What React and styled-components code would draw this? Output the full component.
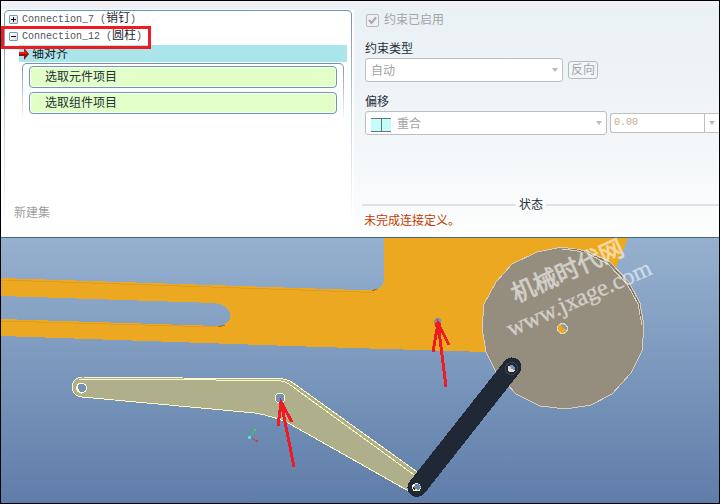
import React from "react";
import styled, { createGlobalStyle } from "styled-components";

const Global = createGlobalStyle`
  *, *::before, *::after { box-sizing: border-box; }
  body { margin: 0; }
  body, button, input, select {
    font-family: "Liberation Sans", "Noto Sans CJK SC", sans-serif;
    font-size: 12px;
    line-height: 16px;
  }
`;

const Frame = styled.div`
  border: 1px solid #000;
  overflow: hidden;
`;

const Dashboard = styled.section`
  display: grid;
  grid-template-columns: 353fr 365fr;
  background: linear-gradient(#f5f0f8, #eaf1f5 8px, #edf3f7 80px, #f5f8fa 160px, #fcfdfd 230px, #fff 232px);
  border-bottom: 1px solid #3f6a80;
  color: #252f38;
`;

const SetPane = styled.div`
  margin: 8px 0 10px;
  padding: 1px 2px 3px 3px;
  background: #fff;
`;

const SetList = styled.div`
  display: flex;
  flex-direction: column;
  min-height: 214px;
  padding: 0 4px 2px 3px;
  border: 1px solid transparent;
  border-radius: 5px;
  background:
    linear-gradient(#fff, #fff) padding-box,
    linear-gradient(#6d92b4, #c5d4e0 50%, #fff) border-box;
`;

const SetRow = styled.div`
  position: relative;
  display: flex;
  align-items: center;
  gap: 4px;
  height: 17px;
  padding-left: 1px;
  white-space: pre;
`;

const Toggle = styled.button`
  display: flex;
  width: 9px;
  height: 9px;
  padding: 0;
  border: 1px solid #7b9ab8;
  border-radius: 1px;
  background: linear-gradient(135deg, #fff, #d9dcdf);
`;

const SetName = styled.span`
  font-family: "Liberation Mono", "Noto Sans CJK SC", monospace;
  font-size: 10px;
  color: #4c545b;
`;

const SetType = styled.span`
  font-size: 12px;
  color: #1f2932;
`;

const Highlight = styled.div`
  position: absolute;
  z-index: 1;
  top: -2px;
  left: -7px;
  width: 150px;
  height: 23px;
  border: 3px solid #ed1c24;
  pointer-events: none;
`;

const Constraint = styled.div`
  display: flex;
  align-items: center;
  gap: 3px;
  height: 17px;
  margin-left: 11px;
  background: #a9e5e9;
  color: #10181c;
`;

const References = styled.div`
  display: flex;
  flex-direction: column;
  gap: 4px;
  margin: 1px 3px 0 14px;
  padding: 2px 6px 5px;
  border: 1px solid transparent;
  border-radius: 5px;
  background:
    linear-gradient(#fff, #fff) padding-box,
    linear-gradient(#6d92b4, #fff) border-box;
`;

const Reference = styled.button`
  height: 22px;
  padding: 0 15px;
  border: 1px solid #6f98ae;
  border-radius: 4px;
  background: #e1ffc6;
  box-shadow: inset 0 0 0 1px #f7fff0;
  color: #252f38;
  text-align: left;
`;

const NewSet = styled.button`
  align-self: flex-start;
  margin-top: auto;
  padding: 0 6px;
  border: 0;
  background: none;
  color: #a0a0a0;
`;

const Settings = styled.div`
  display: flex;
  flex-direction: column;
  padding: 11px 0 8px 8px;
  min-width: 0;
`;

const Enabled = styled.label`
  display: flex;
  align-items: center;
  gap: 5px;
  height: 16px;
  margin-left: 4px;
  color: #a2a5a7;
`;

const Check = styled.input`
  appearance: none;
  width: 13px;
  height: 13px;
  margin: 0;
  border: 1px solid #b5babd;
  border-radius: 2px;
  background: #eef0f1
    url("data:image/svg+xml,%3Csvg xmlns='http://www.w3.org/2000/svg' viewBox='0 0 11 11'%3E%3Cpath d='M2 5l2.5 3L9 2.500' fill='none' stroke='%23a5a8aa' stroke-width='2'/%3E%3C/svg%3E")
    center / 11px no-repeat;
`;

const FieldLabel = styled.label`
  margin: ${(p) => p.$top}px 0 1px 3px;
`;

const FieldRow = styled.div`
  display: flex;
  align-items: center;
  gap: ${(p) => p.$gap}px;
  margin-left: 3px;
`;

const Picker = styled.div`
  position: relative;
  flex: 0 1 ${(p) => p.$width}px;
  min-width: 0;
`;

const Select = styled.select`
  appearance: none;
  display: block;
  width: 100%;
  height: 24px;
  padding: 2px 16px 0 ${(p) => (p.$icon ? 31 : 5)}px;
  border: 1px solid #bcc0c2;
  border-radius: 3px;
  background: #fff;
  color: #a0a3a5;
  opacity: 1;
`;

const PickerIcon = styled.svg`
  position: absolute;
  top: 7px;
  left: 6px;
`;

const PickerArrow = styled.span`
  position: absolute;
  top: 10px;
  right: 4px;
  display: flex;
  pointer-events: none;
`;

const Flip = styled.button`
  height: 18px;
  padding: 0 2px;
  border: 1px solid #b5babd;
  border-radius: 3px;
  background: #f2f5f7;
  color: #a2a5a7;
  line-height: 14px;
`;

const Offset = styled.div`
  display: flex;
  flex: 1;
  height: 20px;
  min-width: 0;
  border: 1px solid #bcc0c2;
  border-right: 0;
  border-radius: 3px 0 0 3px;
  background: #fff;
`;

const OffsetValue = styled.input`
  flex: 1;
  min-width: 0;
  padding: 0 3px;
  border: 0;
  background: none;
  color: #c8ab93;
  font-family: "Liberation Mono", monospace;
  font-size: 10px;
`;

const OffsetMenu = styled.button`
  display: flex;
  align-items: center;
  justify-content: center;
  width: 15px;
  padding: 0;
  border: 0;
  border-left: 1px solid #bcc0c2;
  background: none;
`;

const StatusTitle = styled.h2`
  display: flex;
  align-items: center;
  gap: 3px;
  margin: auto 0 0;
  font-size: 12px;
  font-weight: 400;

  &::before, &::after {
    content: "";
    flex: 154;
    height: 2px;
    background: #dfe1e3;
  }
  &::after { flex-grow: 173; }
`;

const Status = styled.p`
  margin: 0 0 0 2px;
  color: #c23b00;
`;

const Viewport = styled.svg`
  display: block;
  width: 100%;
  height: auto;
  overflow: visible;
`;

function Arrow() {
  return (
    <svg width="8" height="4" viewBox="0 0 8 4" aria-hidden="true">
      <path d="M1 0h6L4 4z" fill="#b8bbbd" />
    </svg>
  );
}

function ConnectionSet({ name, type, open, marked }) {
  return (
    <SetRow>
      <Toggle aria-label={name} aria-expanded={open}>
        <svg width="7" height="7" viewBox="0 0 7 7">
          <path d={open ? "M1 3.500h5" : "M1 3.500h5M3.500 1v5"} stroke="#111" />
        </svg>
      </Toggle>
      <SetName>{name} (<SetType>{type}</SetType>)</SetName>
      {marked && <Highlight />}
    </SetRow>
  );
}

const DISC =
  "562,247 537,252 512,264 496,282 484,304 482,328 486,352 496,372 516,394 540,406 566,409 591,405 612,394 631,373 642,351 644,325 640,303 629,282 610,262 587,251";

function Model() {
  return (
    <Viewport viewBox="1 238 718 265" role="img" aria-label="3D">
      <defs>
        <linearGradient id="sky" gradientUnits="userSpaceOnUse" x1="0" y1="238" x2="0" y2="503">
          <stop offset="0" stopColor="#96b1cf" />
          <stop offset="1" stopColor="#5f7da9" />
        </linearGradient>
      </defs>
      <rect x="1" y="238" width="718" height="265" fill="url(#sky)" />

      <g shapeRendering="crispEdges">
        <path
          fill="#eda821"
          fillRule="evenodd"
          d="M1 278L360 290H374Q384 289 384 278V238H628L616 268L600 352H486L320 347L1 336ZM1 296L214 303C235 304 235 326 218 326L1 319Z"
        />
        <path d="M1 280L360 292H374M1 321L218 327" fill="none" stroke="#e09d1b" />
        <path d="M372 291L377 289M218 327l7-2" stroke="#a97413" />
        <circle cx="438" cy="321" r="3" fill="#7793b8" />
        <path d="M434 320v4l3 2" fill="none" stroke="#c58a19" />

        <polygon points={DISC} fill="#958e7e" stroke="#d8ceb9" />
        <path
          d="M562 249L585 252L608 264L627 284L638 304L642 325"
          fill="none"
          stroke="#d8ceb9"
        />
        <path d="M572 249L586 252L609 263L628 283L639 304L641 318" fill="none" stroke="#7a7364" strokeDasharray="5 2" />
        <circle cx="562.500" cy="328.500" r="5" fill="#eda821" stroke="#ded5c1" />
        <path d="M560 325h4l3 3v2l-3-1z" fill="#7f9dc2" />

        <path
          d="M82 377L283 379Q290 380 296 385L420 474L412 493L320 441L290 424Q277 417 255 413L82 397A10 10 0 0 1 82 377Z"
          fill="#b0af8b"
          stroke="#fdfbc5"
        />
        <path d="M79 379H150L281 381Q287 382 293 387L417 477" fill="none" stroke="#fdfbc5" />
        <g fill="#7491ba" stroke="#fffdd4">
          <circle cx="81.500" cy="388" r="5" />
          <circle cx="280" cy="398" r="5" />
        </g>
        <path d="M77 385q0 7 6 8" fill="none" stroke="#fffdd4" />

        <path d="M512 367L417 487.500" stroke="#202836" strokeWidth="19" strokeLinecap="round" />
        <circle cx="511.500" cy="368.500" r="6" fill="none" stroke="#3a4454" />
        <circle cx="511.500" cy="368.500" r="3.500" fill="#e4dcc9" />
        <path d="M510 365h3l2 3v2l-4-1z" fill="#7896bc" />
        <circle cx="416.500" cy="487.500" r="4.500" fill="#f5f3c4" />
        <path d="M415 484h4l2 4l-3 2l-4-2z" fill="#6685b0" />
        <path d="M413 487l2 3M415 491h3" stroke="#202836" />

        <g fill="none" stroke="#ee1b24" strokeWidth="3">
          <path d="M438 323L446 387M433 352L438 323L449 345" />
          <path d="M281 402L294 467M278 426L281 402L292 422" />
        </g>
        <circle cx="438" cy="325" r="3" fill="#ee1b24" />

        <path d="M249 438L255 430" stroke="#3dcb3d" />
        <path d="M249 437L257 441" stroke="#e33636" />
        <rect x="254" y="429" width="2" height="2" fill="#3ddd3d" />
        <rect x="256" y="440" width="2" height="2" fill="#e33636" />
        <rect x="248" y="436" width="3" height="3" fill="#3fe4ea" />
      </g>

      <g fill="#fff" stroke="#fff" opacity="0.580">
        <text
          transform="translate(516 303) rotate(-24)"
          fontFamily="'Noto Sans CJK SC', sans-serif"
          fontSize="24"
          strokeWidth="0.700"
        >
          机械时代网
        </text>
        <text
          transform="translate(511 337) rotate(-24)"
          fontFamily="'Liberation Serif', serif"
          fontSize="24"
          strokeWidth="0.300"
        >
          www.jxage.com
        </text>
      </g>
    </Viewport>
  );
}

export default function App() {
  return (
    <Frame>
      <Global />
      <Dashboard>
        <SetPane>
          <SetList>
            <ConnectionSet name="Connection_7" type="销钉" open={false} />
            <ConnectionSet name="Connection_12" type="圆柱" open marked />
            <Constraint>
              <svg width="10" height="12" viewBox="0 0 10 12" aria-hidden="true">
                <path d="M0 4h5V0l5 6l-5 6V8H0z" fill="#8d1414" />
                <path d="M0 4h5V1l4 5H0z" fill="#ee1515" />
              </svg>
              轴对齐
            </Constraint>
            <References>
              <Reference>选取元件项目</Reference>
              <Reference>选取组件项目</Reference>
            </References>
            <NewSet disabled>新建集</NewSet>
          </SetList>
        </SetPane>

        <Settings>
          <Enabled>
            <Check type="checkbox" defaultChecked disabled />
            约束已启用
          </Enabled>
          <FieldLabel htmlFor="constraint-type" $top={13}>约束类型</FieldLabel>
          <FieldRow $gap={5}>
            <Picker $width={198}>
              <Select id="constraint-type" disabled>
                <option>自动</option>
              </Select>
              <PickerArrow><Arrow /></PickerArrow>
            </Picker>
            <Flip disabled>反向</Flip>
          </FieldRow>
          <FieldLabel htmlFor="offset-type" $top={12}>偏移</FieldLabel>
          <FieldRow $gap={3}>
            <Picker $width={242}>
              <Select id="offset-type" disabled $icon>
                <option>重合</option>
              </Select>
              <PickerIcon width="20" height="14" viewBox="0 0 20 14" aria-hidden="true">
                <path d="M0 0h20v14H0z" fill="#c5fdfd" />
                <path d="M0 .5h20M0 13.500h20M10.500 0v14" stroke="#6f7373" />
              </PickerIcon>
              <PickerArrow><Arrow /></PickerArrow>
            </Picker>
            <Offset>
              <OffsetValue aria-label="偏移" defaultValue="0.00" disabled />
              <OffsetMenu aria-label="偏移" disabled><Arrow /></OffsetMenu>
            </Offset>
          </FieldRow>
          <StatusTitle>状态</StatusTitle>
          <Status>未完成连接定义。</Status>
        </Settings>
      </Dashboard>
      <Model />
    </Frame>
  );
}
